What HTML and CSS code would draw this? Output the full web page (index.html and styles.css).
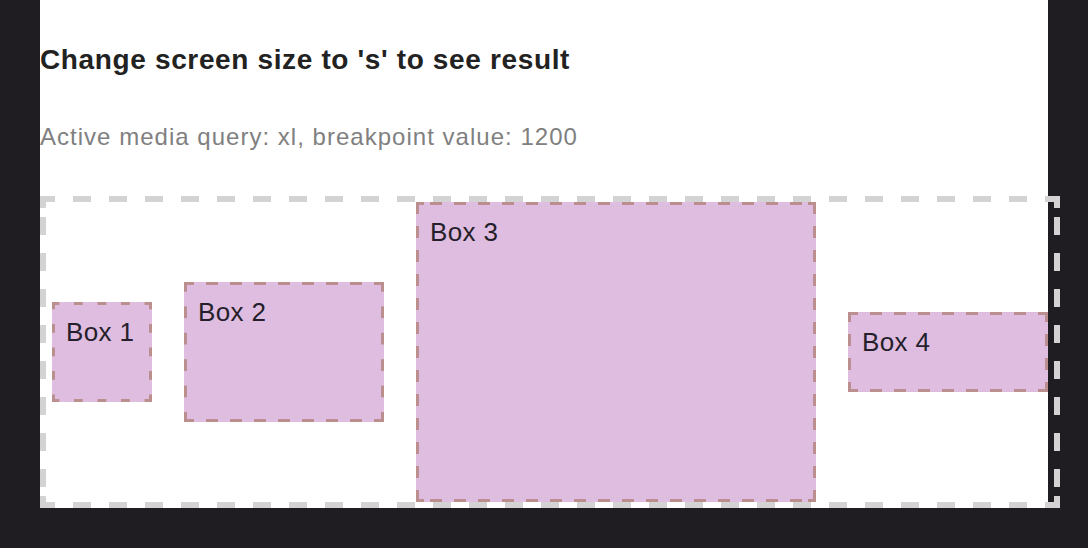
FILE: index.html
```html
<!DOCTYPE html>
<html>
<head>
<meta charset="utf-8">
<link rel="stylesheet" href="styles.css">
</head>
<body>
<div class="page">
  <h2 class="title">Change screen size to 's' to see result</h2>
  <p class="info">Active media query: xl, breakpoint value: 1200</p>
  <div class="container dashed">
    <div class="box dashed box1">Box 1</div>
    <div class="box dashed box2">Box 2</div>
    <div class="box dashed box3">Box 3</div>
    <div class="box dashed box4">Box 4</div>
  </div>
</div>
</body>
</html>
```

FILE: styles.css
```css
html, body {
  margin: 0;
  padding: 0;
  background: #201d22;
  height: 100%;
}
.page {
  margin: 0 40px;
  background: #ffffff;
  padding-top: 44px;
  font-family: "Liberation Sans", Arial, sans-serif;
}
.title {
  margin: 0;
  font-size: 28px;
  line-height: 32px;
  font-weight: bold;
  letter-spacing: 0.64px;
  color: #222222;
}
.info {
  margin: 47px 0 0 0;
  font-size: 24px;
  line-height: 28px;
  letter-spacing: 1.02px;
  color: #808080;
}

/* dashed borders drawn as gradient layers so dash length / spacing is controlled */
.dashed {
  --bw: 3px;
  --bc: #bc8f8f;
  --fill: transparent;
  --hd: 12px; --hp: 24px; --ho: -2px; --hc: 0px;
  --vd: 12px; --vp: 24px; --vo: -2px; --vc: 0px;
  border: var(--bw) solid transparent;
  background:
    linear-gradient(var(--bc), var(--bc)) 0 0 / var(--hc) var(--bw) no-repeat border-box,
    linear-gradient(var(--bc), var(--bc)) 100% 0 / var(--hc) var(--bw) no-repeat border-box,
    linear-gradient(var(--bc), var(--bc)) 0 100% / var(--hc) var(--bw) no-repeat border-box,
    linear-gradient(var(--bc), var(--bc)) 100% 100% / var(--hc) var(--bw) no-repeat border-box,
    linear-gradient(var(--bc), var(--bc)) 0 0 / var(--bw) var(--vc) no-repeat border-box,
    linear-gradient(var(--bc), var(--bc)) 100% 0 / var(--bw) var(--vc) no-repeat border-box,
    linear-gradient(var(--bc), var(--bc)) 0 100% / var(--bw) var(--vc) no-repeat border-box,
    linear-gradient(var(--bc), var(--bc)) 100% 100% / var(--bw) var(--vc) no-repeat border-box,
    linear-gradient(90deg, var(--bc) 0 var(--hd), transparent var(--hd)) var(--ho) 0 / var(--hp) var(--bw) repeat-x border-box,
    linear-gradient(90deg, var(--bc) 0 var(--hd), transparent var(--hd)) var(--ho) 100% / var(--hp) var(--bw) repeat-x border-box,
    linear-gradient(180deg, var(--bc) 0 var(--vd), transparent var(--vd)) 0 var(--vo) / var(--bw) var(--vp) repeat-y border-box,
    linear-gradient(180deg, var(--bc) 0 var(--vd), transparent var(--vd)) 100% var(--vo) / var(--bw) var(--vp) repeat-y border-box,
    var(--fill);
}

.container {
  --bw: 6px;
  --bc: #d3d3d3;
  --fill: transparent;
  --hd: 18px; --hp: 36px; --ho: -3px; --hc: 0px;
  --vd: 18px; --vp: 36px; --vo: 21px; --vc: 12px;
  margin-top: 45px;
  height: 300px;
  box-sizing: content-box;
  width: calc(100% - 12px);
  padding: 0 6px;
  display: flex;
  align-items: center;
  gap: 32px;
}
.box {
  --fill: #dfbde0;
  flex: none;
  box-sizing: border-box;
  font-size: 26px;
  line-height: 28px;
  letter-spacing: 0.35px;
  padding: 13px 11px;
  color: #241f2a;
}
.box1 {
  width: 100px; height: 100px;
  --hd: 9px; --hp: 23.5px; --ho: -1.5px;
  --vd: 9px; --vp: 23.5px; --vo: -1.5px;
}
.box2 {
  width: 200px; height: 140px;
  --vp: 26.4px; --vo: -2px;
}
.box3 {
  width: 400px; height: 300px;
  --ho: 14px; --hc: 8px;
  --vo: 0px;
}
.box4 { width: 200px; height: 80px; }
```
